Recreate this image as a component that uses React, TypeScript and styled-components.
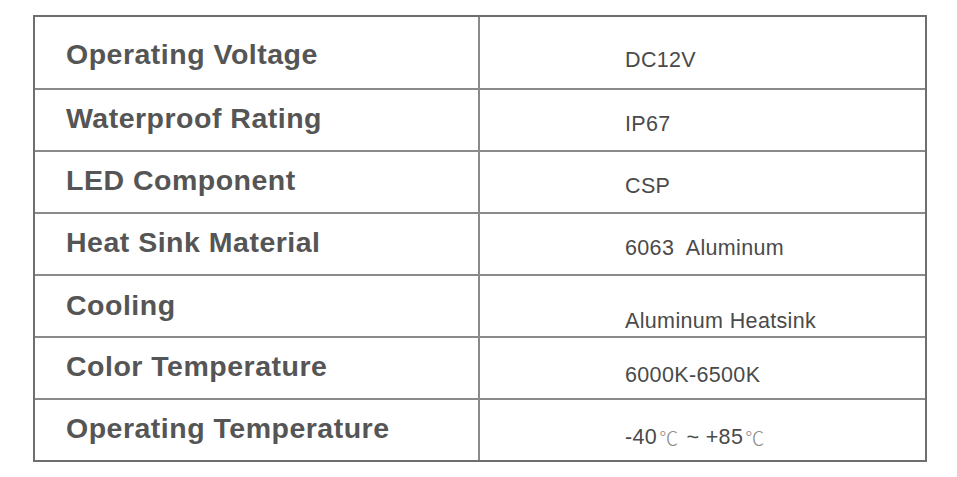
import React from 'react';
import styled, { createGlobalStyle } from 'styled-components';

const GlobalStyle = createGlobalStyle`
  html, body {
    margin: 0;
    padding: 0;
    background: #ffffff;
  }
  body {
    font-family: "Liberation Sans", Arial, sans-serif;
  }
`;

const Page = styled.div`
  width: 957px;
  height: 477px;
  padding: 15px 0 0 33px;
  box-sizing: border-box;
`;

const SpecTable = styled.div`
  width: 894px;
  border: 2px solid #6e6e6e;
  box-sizing: border-box;
`;

const Row = styled.div<{ $first?: boolean }>`
  display: grid;
  grid-template-columns: 445px 1fr;
  height: ${(p) => (p.$first ? '71px' : '62px')};
  box-sizing: border-box;
  border-top: ${(p) => (p.$first ? 'none' : '2px solid #8a8a8a')};
`;

const Label = styled.div<{ $up: number; $down: number }>`
  display: flex;
  align-items: center;
  padding-left: 31px;
  padding-bottom: ${(p) => p.$up}px;
  padding-top: ${(p) => p.$down}px;
  border-right: 2px solid #8a8a8a;
  font-size: 28.5px;
  font-weight: 700;
  letter-spacing: 0.5px;
  color: #555555;
`;

const Value = styled.div<{ $drop: number }>`
  display: flex;
  align-items: center;
  padding-left: 145px;
  padding-top: ${(p) => p.$drop}px;
  font-size: 21.5px;
  letter-spacing: 0.35px;
  color: #4a4a4a;
`;

const Deg = styled.span`
  font-family: "Noto Sans CJK SC", sans-serif;
  font-size: 19px;
  font-weight: 300;
  color: #888888;
  margin: 0 8px 0 2px;
`;

const specs: { label: string; value: React.ReactNode; drop: number; up: number; down: number }[] = [
  { label: 'Operating Voltage', value: 'DC12V', drop: 15, up: 0, down: 3 },
  { label: 'Waterproof Rating', value: 'IP67', drop: 8, up: 3, down: 0 },
  { label: 'LED Component', value: 'CSP', drop: 8, up: 3, down: 0 },
  { label: 'Heat Sink Material', value: '6063\u00a0 Aluminum', drop: 8, up: 3, down: 0 },
  { label: 'Cooling', value: 'Aluminum Heatsink', drop: 30, up: 2, down: 0 },
  { label: 'Color Temperature', value: '6000K-6500K', drop: 14, up: 3, down: 0 },
  {
    label: 'Operating Temperature',
    value: (
      <>
        -40<Deg>℃</Deg>~ +85<Deg>℃</Deg>
      </>
    ),
    drop: 14,
    up: 3,
    down: 0,
  },
];

export default function App() {
  return (
    <>
      <GlobalStyle />
      <Page>
        <SpecTable>
          {specs.map((s, i) => (
            <Row key={s.label} $first={i === 0}>
              <Label $up={s.up} $down={s.down}>
                {s.label}
              </Label>
              <Value $drop={s.drop}>{s.value}</Value>
            </Row>
          ))}
        </SpecTable>
      </Page>
    </>
  );
}
